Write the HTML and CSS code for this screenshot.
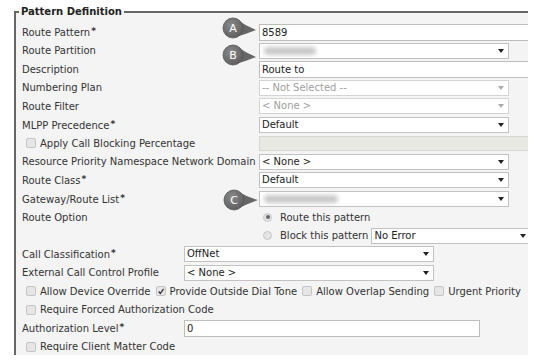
FILE: index.html
```html
<!DOCTYPE html>
<html lang="en">
<head>
    <meta charset="UTF-8">
    <meta name="viewport" content="width=device-width, initial-scale=1.0">
    <title>Pattern Definition</title>
    <link rel="stylesheet" href="styles.css">
</head>
<body>
    <div class="frame">
        <fieldset class="section">
            <legend>Pattern Definition</legend>

            <div class="rows top">
                <label>Route Pattern<span class="req">*</span></label>
                <div><input class="text wide" type="text" value="8589"></div>

                <label>Route Partition</label>
                <div class="select"><span class="blur short"></span></div>

                <label>Description</label>
                <div><input class="text wide" type="text" value="Route to"></div>

                <label>Numbering Plan</label>
                <div class="select disabled">-- Not Selected --</div>

                <label>Route Filter</label>
                <div class="select disabled">&lt; None &gt;</div>

                <label>MLPP Precedence<span class="req">*</span></label>
                <div class="select">Default</div>

                <label class="check indent"><span class="box"></span>Apply Call Blocking Percentage</label>
                <div><input class="text wide off" type="text" disabled></div>

                <label>Resource Priority Namespace Network Domain</label>
                <div class="select">&lt; None &gt;</div>

                <label>Route Class<span class="req">*</span></label>
                <div class="select">Default</div>

                <label>Gateway/Route List<span class="req">*</span></label>
                <div class="select"><span class="blur long"></span></div>

                <label>Route Option</label>
                <div class="radio-row"><span class="radio on"></span>Route this pattern</div>

                <label></label>
                <div class="radio-row"><span class="radio"></span>Block this pattern <div class="select small">No Error</div></div>
            </div>

            <div class="rows bottom">
                <label>Call Classification<span class="req">*</span></label>
                <div class="select">OffNet</div>

                <label>External Call Control Profile</label>
                <div class="select">&lt; None &gt;</div>

                <div class="span checks">
                    <label class="check"><span class="box"></span>Allow Device Override</label>
                    <label class="check"><span class="box">
                        <svg viewBox="0 0 10 10" width="9" height="9"><path d="M2 5 L4.2 7.4 L8.2 1.8" fill="none" stroke="#333" stroke-width="1.6"/></svg>
                    </span>Provide Outside Dial Tone</label>
                    <label class="check"><span class="box"></span>Allow Overlap Sending</label>
                    <label class="check"><span class="box"></span>Urgent Priority</label>
                </div>

                <div class="span checks">
                    <label class="check"><span class="box"></span>Require Forced Authorization Code</label>
                </div>

                <label>Authorization Level<span class="req">*</span></label>
                <div><input class="text level" type="text" value="0"></div>

                <div class="span checks">
                    <label class="check"><span class="box"></span>Require Client Matter Code</label>
                </div>
            </div>
        </fieldset>

        <!-- callout markers over the form -->
        <svg class="callouts" width="528" height="355" viewBox="0 0 528 355">
            <defs>
                <radialGradient id="ball" cx="40%" cy="35%" r="70%">
                    <stop offset="0" stop-color="#8a8a8a"/>
                    <stop offset="1" stop-color="#5c5c5c"/>
                </radialGradient>
            </defs>
            <g>
                <path d="M236 19 Q246 26 256 30 Q246 34 236 37 Z" fill="#666"/>
                <circle cx="233" cy="28" r="10" fill="url(#ball)" stroke="#555" stroke-width="0.8"/>
                <text x="233" y="32" text-anchor="middle">A</text>
            </g>
            <g>
                <path d="M236 46 Q246 53 256 57 Q246 61 236 64 Z" fill="#666"/>
                <circle cx="233" cy="55" r="10" fill="url(#ball)" stroke="#555" stroke-width="0.8"/>
                <text x="233" y="59" text-anchor="middle">B</text>
            </g>
            <g>
                <path d="M237 191 Q247 197 258 200 Q247 204 237 209 Z" fill="#666"/>
                <circle cx="234" cy="200" r="10" fill="url(#ball)" stroke="#555" stroke-width="0.8"/>
                <text x="234" y="204" text-anchor="middle">C</text>
            </g>
        </svg>
    </div>
</body>
</html>
```

FILE: styles.css
```css
body {
    margin: 0;
    background-color: #fff;
    font-family: "DejaVu Sans", Verdana, sans-serif;
    font-size: 10px;
    color: #333;
}
.frame {
    position: relative;
    width: 528px;
    height: 355px;
    padding-top: 6px;
    box-sizing: border-box;
    overflow: hidden;
}
.section {
    margin: 0 0 0 14px;
    padding: 5px 0 40px 6px;
    width: 560px;
    border: 0;
    border-top: 2px solid #666;
    border-left: 2px solid #666;
    background-color: #f4f4f4;
}
legend {
    font-weight: bold;
    color: #222;
    line-height: 12px;
    padding: 0 2px;
    margin-left: -3px;
}
.rows {
    display: grid;
    grid-auto-rows: 18.5px;
    align-items: center;
}
.rows.top {
    grid-template-columns: 237px 1fr;
}
.rows.bottom {
    grid-template-columns: 162px 1fr;
}
.rows > label {
    white-space: nowrap;
}
.req {
    font-weight: bold;
    font-size: 9px;
    vertical-align: 2px;
    margin-left: 1px;
}
.span {
    grid-column: 1 / -1;
}
.text {
    display: block;
    box-sizing: border-box;
    height: 17px;
    margin: 0;
    padding: 0 2px;
    border: 1px solid #bdbdbd;
    background-color: #fff;
    font-family: inherit;
    font-size: 10px;
    color: #222;
}
.text.wide {
    width: 290px;
}
.text.level {
    width: 296px;
}
.text.off {
    height: 15px;
    background-color: #e9e9e3;
    border-color: #d6d6d0;
}
.select {
    position: relative;
    box-sizing: border-box;
    width: 250px;
    height: 16px;
    line-height: 14px;
    padding: 0 2px;
    border: 1px solid #c2c2c2;
    background-color: #fff;
    color: #222;
    white-space: nowrap;
}
.select::after {
    content: "";
    position: absolute;
    right: 4px;
    top: 5px;
    border-top: 4px solid #222;
    border-left: 3px solid transparent;
    border-right: 3px solid transparent;
}
.select.disabled {
    color: #a0a0a0;
    border-color: #d4d4d4;
}
.select.disabled::after {
    border-top-color: #aaa;
}
.select.small {
    width: 160px;
    margin-left: 3px;
}
.blur {
    display: inline-block;
    vertical-align: middle;
    height: 8px;
    margin-left: 2px;
    background-color: #c8c8c8;
    border-radius: 4px;
    filter: blur(2px);
}
.blur.short {
    width: 52px;
}
.blur.long {
    width: 74px;
}
.radio-row {
    display: flex;
    align-items: center;
    white-space: nowrap;
}
.radio {
    position: relative;
    box-sizing: border-box;
    width: 9px;
    height: 9px;
    margin: 0 8px 0 4px;
    border: 1px solid #c6c6c6;
    border-radius: 50%;
    background-color: #e4e4e4;
}
.radio.on::after {
    content: "";
    position: absolute;
    left: 1.5px;
    top: 1.5px;
    width: 4px;
    height: 4px;
    border-radius: 50%;
    background-color: #666;
}
.checks {
    display: flex;
    align-items: center;
    gap: 5px;
    padding-left: 4px;
    white-space: nowrap;
}
.check {
    display: flex;
    align-items: center;
}
.check.indent {
    padding-left: 4px;
}
.box {
    box-sizing: border-box;
    display: flex;
    align-items: center;
    justify-content: center;
    width: 10px;
    height: 10px;
    margin-right: 4px;
    border: 1px solid #c4c4c4;
    border-radius: 2px;
    background-color: #e6e6e6;
}
.callouts {
    position: absolute;
    top: 0;
    left: 0;
    pointer-events: none;
}
.callouts text {
    fill: #fff;
    font-family: "DejaVu Sans", Verdana, sans-serif;
    font-size: 11px;
}
```
